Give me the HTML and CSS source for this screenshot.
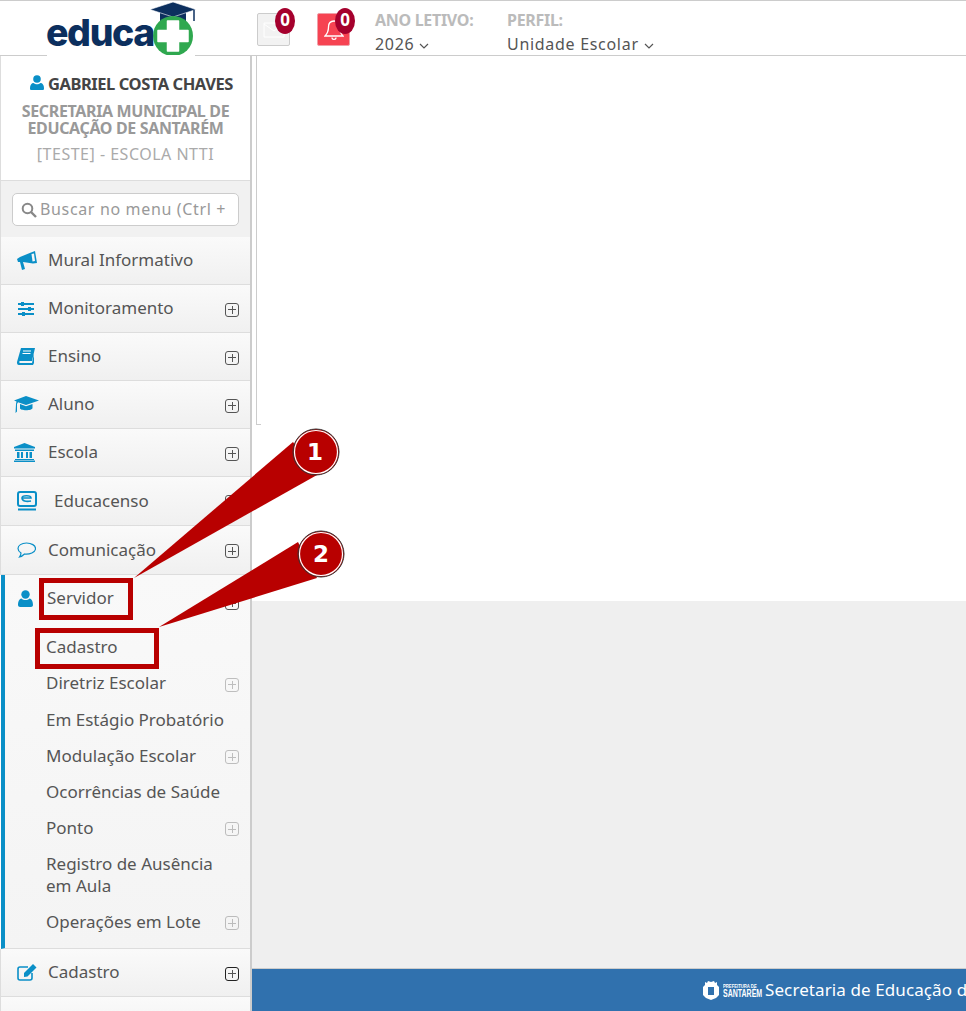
FILE: index.html
```html
<!DOCTYPE html>
<html>
<head>
<meta name="viewport" content="width=device-width, initial-scale=1">
<meta charset="utf-8">
<link rel="stylesheet" href="styles.css">
</head>
<body>

<div class="page">

  <!-- Top bar -->
  <div class="topbar">
    <div class="logo">
      <span class="logo-text">educa</span>
      <svg class="logo-mark" width="50" height="54" viewBox="0 0 50 54">
        <path d="M11 11h26v12H11z" fill="#0c2f5e"/>
        <path d="M24 1 47 8.500 24 16 1 8.500z" fill="#0c2f5e" stroke="#fff" stroke-width=".6"/>
        <path d="M45 9v11" stroke="#0c2f5e" stroke-width="1.500"/>
        <circle cx="24" cy="35" r="20" fill="#2fa84f"/>
        <path d="M18.500 20h11v9.500H39v11h-9.500V50h-11v-9.500H9v-11h9.500z" fill="#fff" stroke="#fff" stroke-width="1.500" stroke-linejoin="round"/>
      </svg>
    </div>
    <div class="notify notify-mail">
      <svg width="22" height="16" viewBox="0 0 22 16"><path d="M1 1h20v14H1zM1 2l10 7 10-7" fill="none" stroke="#fff" stroke-width="1"/></svg>
      <span class="badge">0</span>
    </div>
    <div class="notify notify-bell">
      <svg width="20" height="24" viewBox="0 0 20 24"><path d="M10 3c-4 0-5.500 3-5.500 6 0 5-1.500 7-3.500 9h18c-2-2-3.500-4-3.500-9 0-3-1.500-6-5.500-6zM8 19.500c0 2.500 4 2.500 4 0" fill="none" stroke="#fff" stroke-width="1.300"/></svg>
      <span class="badge">0</span>
    </div>
    <div class="picker picker-year">
      <div class="picker-label">ANO LETIVO:</div>
      <div class="picker-value">2026 <svg class="caret" width="10" height="6" viewBox="0 0 10 6"><path d="M1 1l4 4 4-4" fill="none" stroke="#555" stroke-width="1.200"/></svg></div>
    </div>
    <div class="picker">
      <div class="picker-label">PERFIL:</div>
      <div class="picker-value">Unidade Escolar <svg class="caret" width="10" height="6" viewBox="0 0 10 6"><path d="M1 1l4 4 4-4" fill="none" stroke="#555" stroke-width="1.200"/></svg></div>
    </div>
  </div>

  <div class="body-row">

    <!-- Side menu -->
    <div class="sidebar">
      <div class="profile">
        <div class="profile-name">
          <svg width="14" height="15" viewBox="0 0 14 15"><circle cx="7" cy="4" r="3.800" fill="#0a8fc7"/><path d="M1 15c-1 0-1-1-1-2 0-3 1.500-5 3.500-5 1 1 2.200 1.300 3.500 1.300S9.500 9 10.500 8c2 0 3.500 2 3.500 5 0 1 0 2-1 2z" fill="#0a8fc7"/></svg>
          GABRIEL COSTA CHAVES
        </div>
        <div class="profile-org">SECRETARIA MUNICIPAL DE EDUCAÇÃO DE SANTARÉM</div>
        <div class="profile-school">[TESTE] - ESCOLA NTTI</div>
      </div>

      <div class="search-area">
        <div class="search">
          <svg width="16" height="16" viewBox="0 0 16 16"><circle cx="6.500" cy="6.500" r="4.800" fill="none" stroke="#888" stroke-width="2"/><path d="M10 10l5 5" stroke="#888" stroke-width="2.400"/></svg>
          <span class="search-text">Buscar no menu (Ctrl +</span>
        </div>
      </div>

      <div class="menu-item">
        <svg class="menu-icon" width="20" height="19" viewBox="0 0 20 19"><path d="M0 8 3 6 14 1.500 18 0l2 12-4 .5-10-1.500 2 7-3 1-2-8H1z" fill="#0a8fc7"/><path d="M14.500 3l1 7.500 2.500-.5-1-7.500z" fill="#f7f7f7"/></svg>
        <span class="menu-label">Mural Informativo</span>
      </div>
      <div class="menu-item">
        <svg class="menu-icon" width="18" height="16" viewBox="0 0 18 16"><path d="M1 3h16M1 8h16M1 13h16" stroke="#0a8fc7" stroke-width="2"/><path d="M4 1h3v4H4zM11 6h3v4h-3zM5 11h3v4H5z" fill="#0a8fc7"/></svg>
        <span class="menu-label">Monitoramento</span>
        <span class="plus"></span>
      </div>
      <div class="menu-item">
        <svg class="menu-icon" width="18" height="17" viewBox="0 0 18 17"><path d="M4 0h14l-3 13H3c-1 0-1 2 0 2h12l2-9v9l-1 2H2c-2 0-2-2-2-3z" fill="#0a8fc7"/><path d="M6 3h8M5.500 5.500h8" stroke="#fff" stroke-width="1"/></svg>
        <span class="menu-label">Ensino</span>
        <span class="plus"></span>
      </div>
      <div class="menu-item">
        <svg class="menu-icon icon-wide" width="25" height="17" viewBox="0 0 25 17"><path d="M12 0l13 4.500L12 9 4 6.300 3 8v7.500L1.500 17 2 8l.5-2.500L0 4.500z" fill="#0a8fc7"/><path d="M6 8l6 2.200L18.500 8v4c0 3-13 3-12.500 0z" fill="#0a8fc7"/></svg>
        <span class="menu-label">Aluno</span>
        <span class="plus"></span>
      </div>
      <div class="menu-item">
        <svg class="menu-icon icon-wide" width="21" height="19" viewBox="0 0 21 19"><path d="M10.500 0 21 4v1.500H0V4z" fill="#0a8fc7"/><path d="M1 6.500h19V8H1zM3 9h2.500v6H3zM7 9h2v6H7zM12 9h2v6h-2zM15.500 9H18v6h-2.500zM1 16h19v1H1zM0 17.500h21V19H0z" fill="#0a8fc7"/></svg>
        <span class="menu-label">Escola</span>
        <span class="plus"></span>
      </div>
      <div class="menu-item tall">
        <svg class="menu-icon" width="20" height="20" viewBox="0 0 20 20"><path d="M3 1h14a2 2 0 0 1 2 2v10a2 2 0 0 1-2 2H3a2 2 0 0 1-2-2V3a2 2 0 0 1 2-2z" fill="none" stroke="#0a8fc7" stroke-width="2"/><path d="M5 7h9c0-3-9-3-9 0 0 3 4 4 9 3" fill="none" stroke="#0a8fc7" stroke-width="1.600"/><path d="M1 18.500h18" stroke="#0a8fc7" stroke-width="2"/></svg>
        <span class="menu-label label-indent">Educacenso</span>
        <span class="plus"></span>
      </div>
      <div class="menu-item tall">
        <svg class="menu-icon" width="19" height="16" viewBox="0 0 19 16"><path d="M9.500 1C4.500 1 1 3.500 1 6.500c0 2 1.500 3.500 3 4.500 0 1.500-.5 2.500-1.500 4 2-.5 3.500-1.500 5-3 5 .5 11-1.500 11-5.500C18.500 3.500 14.500 1 9.500 1z" fill="none" stroke="#0a8fc7" stroke-width="1.200"/></svg>
        <span class="menu-label">Comunicação</span>
        <span class="plus"></span>
      </div>

      <div class="menu-group">
        <div class="menu-item open">
          <svg class="menu-icon" width="15" height="17" viewBox="0 0 15 17"><circle cx="7.500" cy="4.500" r="4.200" fill="#0a8fc7"/><path d="M2 17c-1 0-2-1-2-2 0-3 1-6 3.500-6.500 1 1 2.500 1.500 4 1.500s3-.5 4-1.500C14 9 15 12 15 15c0 1-1 2-2 2z" fill="#0a8fc7"/></svg>
          <span class="menu-label">Servidor</span>
          <span class="plus"></span>
        </div>
        <div class="sub-item"><span>Cadastro</span></div>
        <div class="sub-item sub-gap"><span>Diretriz Escolar</span><span class="plus dim"></span></div>
        <div class="sub-item"><span>Em Estágio Probatório</span></div>
        <div class="sub-item"><span>Modulação Escolar</span><span class="plus dim"></span></div>
        <div class="sub-item"><span>Ocorrências de Saúde</span></div>
        <div class="sub-item"><span>Ponto</span><span class="plus dim"></span></div>
        <div class="sub-item"><span class="sub-wrap">Registro de Ausência em Aula</span></div>
        <div class="sub-item"><span>Operações em Lote</span><span class="plus dim"></span></div>
      </div>

      <div class="menu-item">
        <svg class="menu-icon" width="20" height="17" viewBox="0 0 20 17"><path d="M15 9v5a2 2 0 0 1-2 2H3a2 2 0 0 1-2-2V5a2 2 0 0 1 2-2h8" fill="none" stroke="#0a8fc7" stroke-width="1.600"/><path d="M7 9l9-9 3.500 3.500-9 9L7 13z" fill="#0a8fc7"/></svg>
        <span class="menu-label">Cadastro</span>
        <span class="plus dark"></span>
      </div>
      <div class="menu-item"></div>
    </div>

    <!-- Main area -->
    <div class="main">
      <div class="content-white">
        <div class="panel"><div class="panel-corner"></div></div>
      </div>
      <div class="content-gray"></div>
      <div class="footer">
        <div class="footer-logo">
          <svg class="footer-crest" width="18" height="22" viewBox="0 0 18 22"><path d="M3 3l2 1 1-2 3 1 3-1 1 2 2-1v3l2 2v8l-3 3-5 2-5-2-3-3V8l2-2z" fill="#fff"/><path d="M6 8h6v8H6z" fill="#3071ae"/></svg>
          <div class="footer-logo-text">
            <div class="footer-logo-small">PREFEITURA DE</div>
            <div class="footer-logo-big">SANTARÉM</div>
          </div>
        </div>
        <span class="footer-text">Secretaria de Educação de Santarém</span>
      </div>
    </div>

  </div>

  <!-- Tutorial callouts drawn over the page -->
  <svg class="callouts" width="966" height="1011" viewBox="0 0 966 1011">
    <path d="M134 578 293 442 317 475z" fill="#b80000"/>
    <path d="M159 627 298 542 317 578z" fill="#b80000"/>
    <circle cx="316" cy="452" r="23" fill="#b80000" stroke="#333" stroke-width="1"/>
    <circle cx="316" cy="452" r="21.500" fill="none" stroke="#fff" stroke-width="1.200"/>
    <circle cx="321" cy="554" r="23" fill="#b80000" stroke="#333" stroke-width="1"/>
    <circle cx="321" cy="554" r="21.500" fill="none" stroke="#fff" stroke-width="1.200"/>
    <text class="callout-num" x="315" y="460">1</text>
    <text class="callout-num" x="321" y="562">2</text>
  </svg>
  <div class="callout-box box-servidor"></div>
  <div class="callout-box box-cadastro"></div>

</div>

</body>
</html>
```

FILE: styles.css
```css
html, body {
    margin: 0;
    padding: 0;
}

body {
    font-family: "Noto Sans", "Open Sans", sans-serif;
    color: #555;
}

.page {
    position: relative;
    width: 966px;
    height: 1011px;
    overflow: hidden;
    display: flex;
    flex-direction: column;
    background: #fff;
}

/* Top bar */
.topbar {
    height: 54px;
    flex: none;
    display: flex;
    align-items: flex-start;
    border-top: 1px solid #ccc;
    border-bottom: 1px solid #ccc;
}

.logo {
    display: flex;
    align-items: flex-start;
    height: 55px;
    width: 148px;
    margin-left: 47px;
    margin-right: 62px;
    background: #fff;
    position: relative;
    z-index: 1;
}

.logo-text {
    font-family: "Inter", "Liberation Sans", sans-serif;
    font-weight: 800;
    font-size: 37.5px;
    letter-spacing: -1.4px;
    line-height: 38px;
    color: #0c2f5e;
    margin-top: 13px;
    margin-left: -1px;
    width: 107px;
}

.logo-mark {
    margin-top: 0;
    margin-left: -4px;
    flex: none;
}

.notify {
    width: 31px;
    height: 31px;
    margin-top: 12px;
    margin-right: 27px;
    border: 1px solid #ccc;
    border-radius: 2px;
    display: flex;
    align-items: center;
    justify-content: center;
    position: relative;
}

.notify-mail {
    background: #f2f2f2;
}

.notify-bell {
    background: #f64352;
    border-color: #f0a0a8;
    margin-right: 25px;
}

.badge {
    position: absolute;
    top: -6px;
    left: 17px;
    width: 20px;
    height: 26px;
    border-radius: 50%;
    background: #a5002d;
    color: #fff;
    font-weight: 700;
    font-size: 17px;
    line-height: 23px;
    text-align: center;
}

.picker {
    margin-top: 8px;
}

.picker-year {
    width: 132px;
}

.picker-label {
    font-weight: 700;
    font-size: 16px;
    letter-spacing: -0.3px;
    line-height: 22px;
    color: #bbb;
}

.picker-value {
    font-size: 16px;
    letter-spacing: 0.7px;
    line-height: 26px;
    color: #555;
}

.caret {
    vertical-align: 1px;
}

.body-row {
    flex: 1;
    display: flex;
    min-height: 0;
}

/* Side menu */
.sidebar {
    width: 250px;
    flex: none;
    border-right: 2px solid #ccc;
    overflow: hidden;
    background: #fff;
}

.profile {
    height: 125px;
    box-sizing: border-box;
    padding: 18px 14px 0;
    text-align: center;
    border-bottom: 1px solid #ddd;
    border-left: 1px solid #ddd;
}

.profile-name {
    font-weight: 700;
    font-size: 16.5px;
    letter-spacing: -0.45px;
    line-height: 20px;
    color: #444;
    white-space: nowrap;
    padding-left: 12px;
}

.profile-org {
    font-weight: 700;
    font-size: 16px;
    letter-spacing: -0.35px;
    line-height: 17px;
    color: #999;
    margin-top: 9px;
}

.profile-school {
    font-size: 16px;
    letter-spacing: 0.5px;
    line-height: 20px;
    color: #aaa;
    margin-top: 7px;
    white-space: nowrap;
}

.search-area {
    height: 56px;
    box-sizing: border-box;
    padding: 12px 11px;
    background: #f1f1f1;
    border-left: 1px solid #ddd;
}

.search {
    width: 227px;
    height: 33px;
    box-sizing: border-box;
    border: 1px solid #ccc;
    border-radius: 5px;
    background: #fff;
    display: flex;
    align-items: center;
    padding-left: 8px;
    gap: 3px;
    overflow: hidden;
}

.search-text {
    font-size: 16px;
    letter-spacing: 0.65px;
    color: #999;
    white-space: nowrap;
    margin-top: -2px;
}

.menu-item {
    height: 47px;
    display: flex;
    align-items: center;
    position: relative;
    padding-left: 47px;
    font-size: 17px;
    color: #555;
    background: linear-gradient(#fafafa, #f0f0f0);
    border-bottom: 1px solid #ddd;
    border-left: 1px solid #ddd;
}

.menu-item.tall {
    height: 48px;
}

.menu-group {
    margin-left: 1px;
    border-left: 4px solid #0a8fc7;
    background: linear-gradient(#f9f9f9, #f4f4f4);
    border-bottom: 1px solid #ddd;
    padding-bottom: 8px;
}

.menu-group .menu-item.open {
    height: 41px;
    padding-top: 13px;
    padding-left: 42px;
    align-items: flex-start;
    background: none;
    border: 0;
}

.menu-icon {
    position: absolute;
    left: 16px;
}

.icon-wide {
    left: 13px;
}

.menu-group .menu-icon {
    left: 13px;
    margin-top: 2px;
}

.menu-label {
    white-space: nowrap;
    margin-top: -2px;
}

.label-indent {
    margin-left: 6px;
}

.plus {
    position: absolute;
    right: 11px;
    top: 50%;
    width: 14px;
    height: 14px;
    margin-top: -6px;
    box-sizing: border-box;
    border: 1px solid #555;
    border-radius: 3px;
    background:
        linear-gradient(#555, #555) center / 8px 1px no-repeat,
        linear-gradient(#555, #555) center / 1px 8px no-repeat;
}

.plus.dark {
    border-color: #222;
}

.plus.dim {
    opacity: 0.35;
}

.sub-item {
    position: relative;
    padding: 7px 24px 7px 41px;
    font-size: 17px;
    line-height: 22px;
    color: #555;
    white-space: nowrap;
}

.sub-gap {
    padding-bottom: 8px;
}

.sub-wrap {
    display: block;
    white-space: normal;
}

/* Main area */
.main {
    flex: 1;
    min-width: 0;
    display: flex;
    flex-direction: column;
}

.content-white {
    height: 545px;
    flex: none;
    background: #fff;
    padding-left: 4px;
}

.panel {
    height: 369px;
    box-sizing: border-box;
    border-left: 1px solid #ccc;
    display: flex;
    align-items: flex-end;
}

.panel-corner {
    width: 4px;
    height: 1px;
    background: #ccc;
}

.content-gray {
    flex: 1;
    background: #efefef;
}

.footer {
    height: 43px;
    flex: none;
    background: #3071ae;
    border-top: 1px solid #ccc;
    box-sizing: border-box;
    display: flex;
    align-items: center;
    padding-left: 450px;
    color: #fff;
    overflow: hidden;
    white-space: nowrap;
}

.footer-logo {
    display: flex;
    align-items: center;
    gap: 3px;
    margin-right: 8px;
    width: 55px;
    flex: none;
}

.footer-crest {
    flex: none;
}

.footer-logo-text {
    font-family: "Liberation Sans", sans-serif;
    font-weight: 700;
    line-height: 8px;
    text-align: center;
    flex: none;
    width: 48px;
    transform: scaleX(0.7);
    transform-origin: left center;
}

.footer-logo-small {
    font-size: 6px;
}

.footer-logo-big {
    font-size: 10px;
}

.footer-text {
    font-size: 17px;
    letter-spacing: 0.1px;
    margin-top: -2px;
}

/* Tutorial callouts */
.callouts {
    position: absolute;
    left: 0;
    top: 0;
}

.callout-num {
    font-family: "DejaVu Sans", sans-serif;
    font-weight: 700;
    font-size: 23px;
    fill: #fff;
    text-anchor: middle;
}

.callout-box {
    position: absolute;
    box-sizing: border-box;
    border: 5px solid #b80000;
}

.box-servidor {
    left: 39px;
    top: 578px;
    width: 94px;
    height: 42px;
}

.box-cadastro {
    left: 35px;
    top: 628px;
    width: 124px;
    height: 41px;
}
```
